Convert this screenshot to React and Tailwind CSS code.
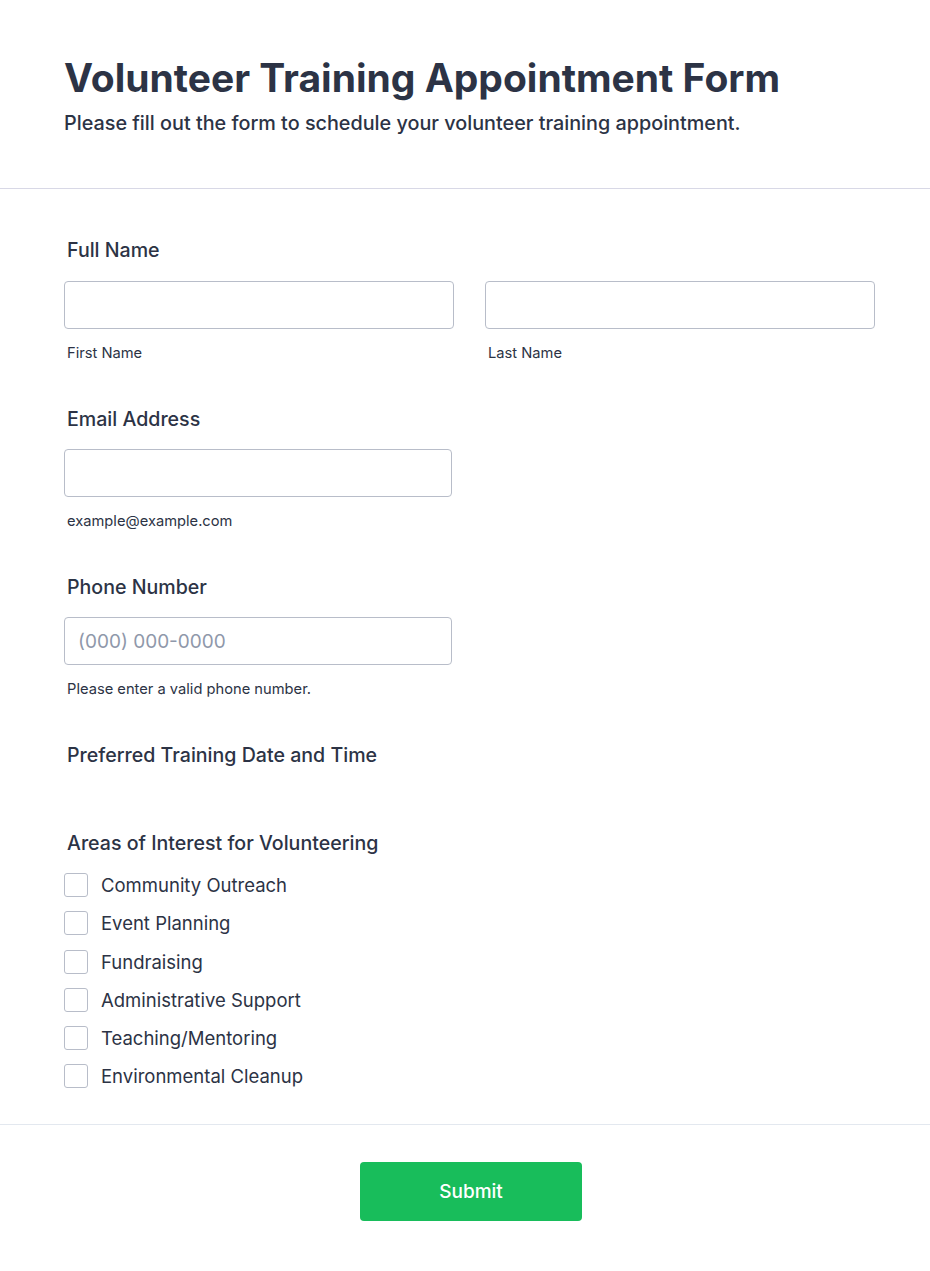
import React from 'react';

const areas = [
  'Community Outreach',
  'Event Planning',
  'Fundraising',
  'Administrative Support',
  'Teaching/Mentoring',
  'Environmental Cleanup',
];

const inputCls =
  'block w-full h-12 rounded border border-[#b8bdc9] bg-white px-[13px] text-[19px] text-[#2c3345] placeholder:text-[#8f98aa] outline-none';

const Label = ({ children }) => (
  <div className="pl-[3px] pt-px text-[19.6px] font-medium text-[#2c3345] leading-[27px]">{children}</div>
);

const SubLabel = ({ children }) => (
  <div className="pl-[3px] mt-[14px] pt-px text-[14.7px] text-[#2c3345] leading-[19px]">{children}</div>
);

export default function App() {
  return (
    <div className="min-h-[1271px] bg-white font-['Inter',sans-serif] text-[#2c3345]">
      {/* header */}
      <header className="px-16 pt-[54px] pb-[53px] border-b border-[#d8d8e6]">
        <h1 className="text-[39px] font-bold leading-[48px]">
          Volunteer Training Appointment Form
        </h1>
        <p className="mt-[9px] text-[19.8px] font-medium leading-6">
          Please fill out the form to schedule your volunteer training appointment.
        </p>
      </header>

      <form className="pl-16 pr-[55px] pt-[47px]">
        {/* Full name */}
        <Label>Full Name</Label>
        <div className="mt-[17px] grid grid-cols-2 gap-[31px]">
          <div>
            <input className={inputCls} />
            <SubLabel>First Name</SubLabel>
          </div>
          <div>
            <input className={inputCls} />
            <SubLabel>Last Name</SubLabel>
          </div>
        </div>

        {/* Email */}
        <div className="mt-[42px]">
          <Label>Email Address</Label>
          <div className="mt-[16px] w-[388px]">
            <input className={inputCls} />
            <SubLabel>example@example.com</SubLabel>
          </div>
        </div>

        {/* Phone */}
        <div className="mt-[42px]">
          <Label>Phone Number</Label>
          <div className="mt-[16px] w-[388px]">
            <input className={inputCls} placeholder="(000) 000-0000" />
            <SubLabel>Please enter a valid phone number.</SubLabel>
          </div>
        </div>

        <div className="mt-[42px]">
          <Label>Preferred Training Date and Time</Label>
        </div>

        {/* Areas */}
        <div className="mt-[60px]">
          <Label>Areas of Interest for Volunteering</Label>
          <div className="mt-[16px] flex flex-col gap-[14.3px]">
            {areas.map((a) => (
              <label key={a} className="flex items-center gap-[13px]">
                <span className="w-6 h-6 rounded-[3px] border border-[#b8bdc9] bg-white" />
                <span className="text-[18.5px] leading-6">{a}</span>
              </label>
            ))}
          </div>
        </div>
      </form>

      {/* footer */}
      <div className="mt-[36px] border-t border-[#e3e8ef] pt-[37px] pl-3 flex justify-center">
        <button className="w-[222px] h-[59px] rounded bg-[#18bd5b] text-white text-[19px] font-medium">
          Submit
        </button>
      </div>
    </div>
  );
}
